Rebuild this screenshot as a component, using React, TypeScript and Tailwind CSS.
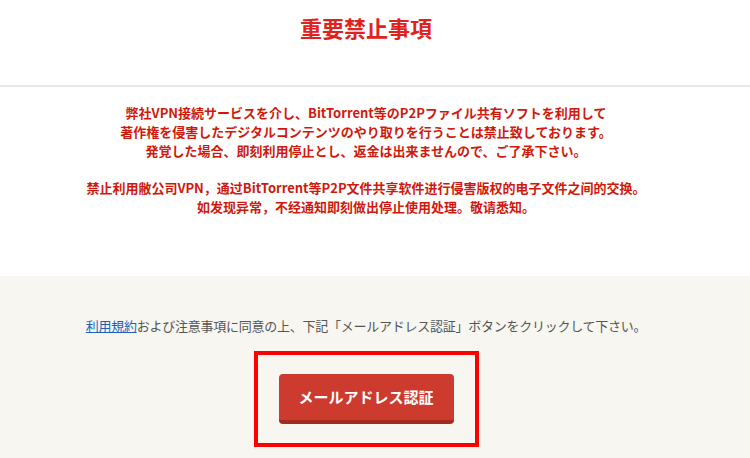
const App = () => {
    return (
        <div
            className="w-[750px] h-[458px] bg-white overflow-hidden flex flex-col"
            style={{ fontFamily: '"Noto Sans CJK JP", "Noto Sans", sans-serif' }}
        >
            {/* Title */}
            <div className="h-[87px] shrink-0 border-b-2 border-[#e6e6e6] pt-[16px] pr-[18px] text-center">
                <h1 className="text-[22px] leading-[22px] font-bold text-[#e3211c]">重要禁止事項</h1>
            </div>

            {/* Notice */}
            <div className="h-[189px] shrink-0 pt-[16px] pr-[18px] text-center text-[13px] leading-[19px] font-bold text-[#d0190c]">
                <p>
                    弊社VPN接続サービスを介し、BitTorrent等のP2Pファイル共有ソフトを利用して
                    <br />
                    著作権を侵害したデジタルコンテンツのやり取りを行うことは禁止致しております。
                    <br />
                    発覚した場合、即刻利用停止とし、返金は出来ませんので、ご了承下さい。
                </p>
                <p className="mt-[18px]">
                    禁止利用敝公司VPN，通过BitTorrent等P2P文件共享软件进行侵害版权的电子文件之间的交换。
                    <br />
                    如发现异常，不经通知即刻做出停止使用处理。敬请悉知。
                </p>
            </div>

            {/* Agreement */}
            <div className="flex-1 bg-[#f7f6f0] pt-[40px] pr-[18px]">
                <p className="text-center text-[13px] leading-[19px] tracking-[-0.25px] text-[#555555]">
                    <a href="#" className="text-[#1d5fb8] underline">利用規約</a>
                    および注意事項に同意の上、下記「メールアドレス認証」ボタンをクリックして下さい。
                </p>
                <div className="flex justify-center mt-[16px]">
                    <div className="border-4 border-[#ff0000] px-[21px] py-[19px]">
                        <button className="w-[175px] h-[50px] rounded-[4px] bg-[#cd3b2e] border-b-4 border-[#a32b21] text-white text-[15px] font-bold">
                            メールアドレス認証
                        </button>
                    </div>
                </div>
            </div>
        </div>
    );
};

export default App;
